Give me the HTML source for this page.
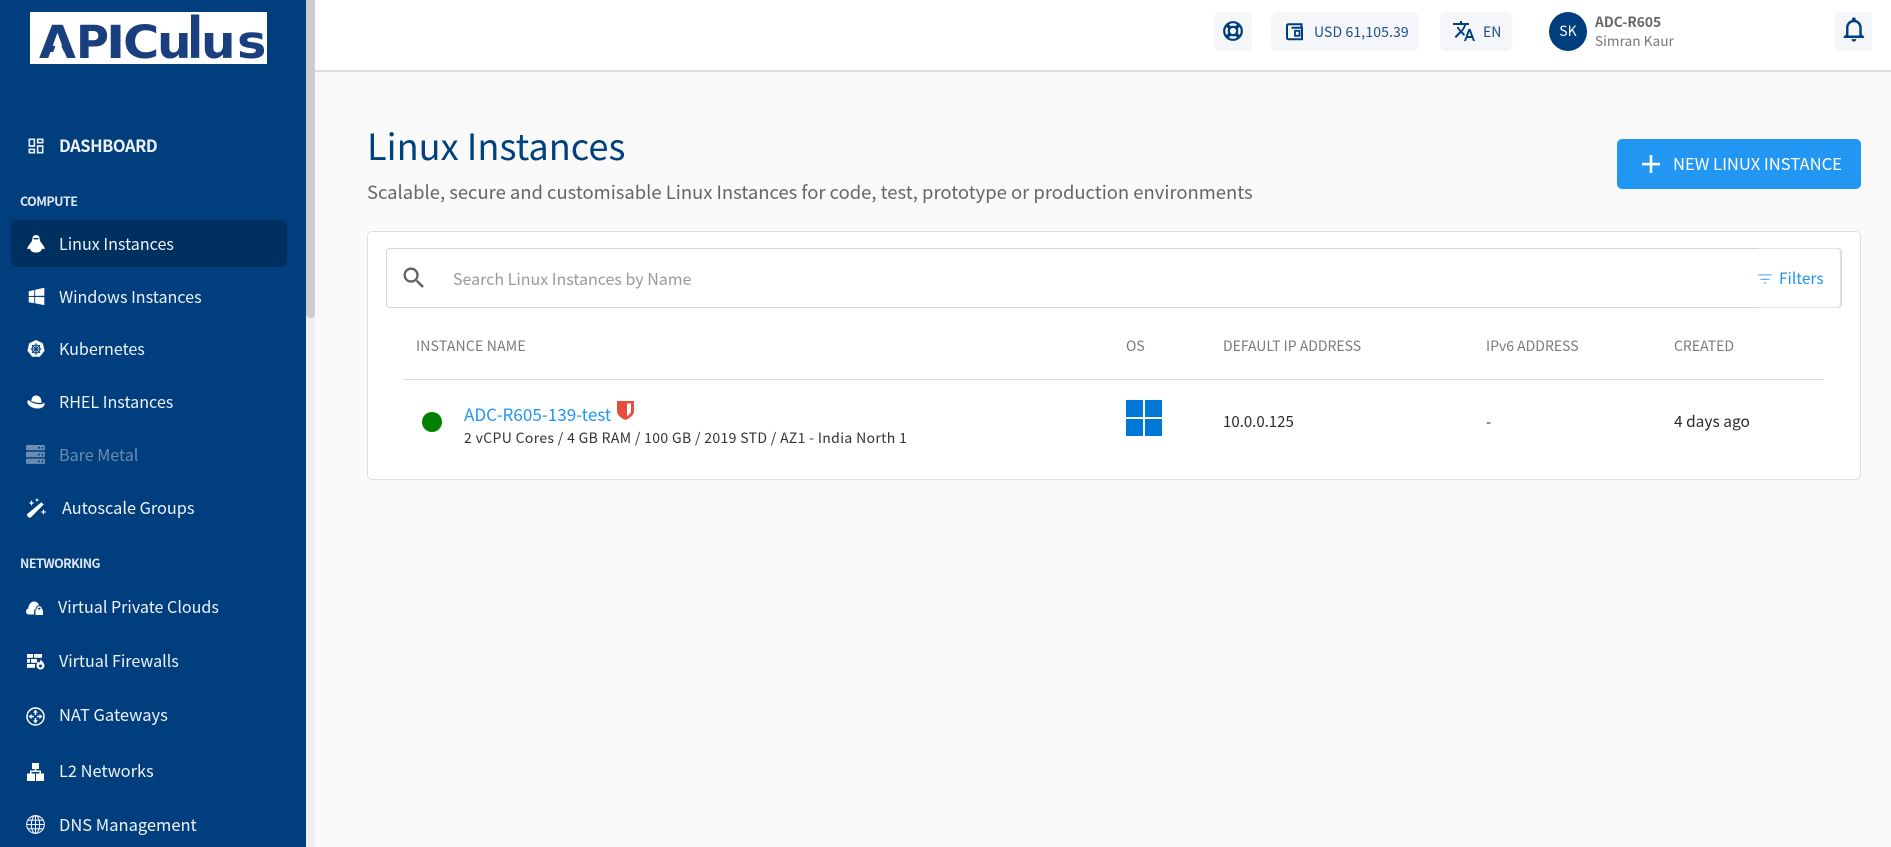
<!DOCTYPE html>
<html lang="en"><head><meta charset="utf-8"><title>Linux Instances</title>
<style>
html,body{margin:0;padding:0;width:1891px;height:847px;overflow:hidden;background:#fafafa;font-family:"Noto Sans CJK JP","Liberation Sans",sans-serif;}
.a{position:absolute;white-space:nowrap;line-height:1;}
svg{position:absolute;display:block}
.nav{color:#eef3f9;font-size:16.100px;left:59px;}
.sec{color:#dfe7f1;font-size:12.500px;font-weight:700;left:20px;letter-spacing:-.55px;}
.th{color:#7a7a7a;font-size:14px;top:339px;}
.box{position:absolute;background:#f4f6f9;border-radius:6px;top:12px;height:39px;}
.td{color:#2b2b2b;font-size:15px;top:414px;}
.lg{position:absolute;top:8px;font-family:'DejaVu Sans',sans-serif;font-weight:700;font-size:45px;line-height:45px;color:#1a3f7e;transform-origin:0 38px;white-space:nowrap}
</style></head><body>

<div class="a" style="left:0;top:0;width:306px;height:847px;background:#003e7e"></div>
<div class="a" style="left:306px;top:0;width:9px;height:847px;background:#f0f0f0"></div>
<div class="a" style="left:306px;top:0;width:9px;height:318px;background:#cdcdcd;border-radius:0 0 4px 4px"></div>

<div class="a" style="left:30px;top:12px;width:237px;height:52px;background:#fff;overflow:hidden">
<span class="lg" style="left:9px;transform:scaleX(1.060)">A</span>
<svg style="left:0;top:0" width="60" height="52"><polygon points="28,27 21,46 37,46" fill="#fff"/></svg>
<span class="lg" style="left:46px;">P</span>
<span class="lg" style="left:76px;transform:scaleX(1.150)">I</span>
<span class="lg" style="left:92.500px;transform:scaleX(1.100)">C</span>
<span class="lg" style="left:127px;transform:scaleX(1.080)">u</span>
<span class="lg" style="left:157px;transform:scaleX(1.050) scaleY(1.260)">l</span>
<span class="lg" style="left:171px;transform:scaleX(1.080)">u</span>
<span class="lg" style="left:207px;transform:scaleX(1.100)">s</span>
</div>

<svg style="left:25.500px;top:135.500px" width="20" height="20" viewBox="0 0 24 24" fill="#e8eef6"><path d="M19,5V7H15V5H19M9,5V11H5V5H9M19,13V19H15V13H19M9,17V19H5V17H9M21,3H13V9H21V3M11,3H3V13H11V3M21,11H13V21H21V11M11,15H3V21H11V15Z"/></svg>
<div class="a nav" style="top:137px;font-size:16.500px;font-weight:700;letter-spacing:-.45px;">DASHBOARD</div>
<div class="a sec" style="top:195px;">COMPUTE</div>

<div class="a" style="left:11px;top:220px;width:276px;height:47px;background:#00305f;border-radius:6px"></div>
<svg style="left:27px;top:235px" width="18" height="18" viewBox="0 0 18 18"><path d="M9 0C6.600 0 5.400 1.800 5.300 4 5.200 6.400 3.700 7.700 2.200 9.800 1 11.500.2 12.800.4 13.800.7 14.600 1.800 14.200 3 13.500 3.500 16.200 5.500 17.500 9 17.500S14.500 16.200 15 13.500C16.200 14.200 17.300 14.600 17.600 13.800 17.800 12.800 17 11.500 15.800 9.800 14.300 7.700 12.800 6.400 12.700 4 12.600 1.800 11.400 0 9 0Z" fill="#fff"/><rect x="6.500" y="3" width="5" height="1.400" rx=".6" fill="#00305f"/></svg>
<div class="a nav" style="top:235px;">Linux Instances</div>

<svg style="left:26px;top:285px" width="22" height="22" viewBox="0 0 24 24" fill="#fff"><path d="M3,12V6.750L9,5.430V11.910L3,12M20,3V11.750L10,11.900V5.210L20,3M3,13L9,13.090V19.900L3,18.750V13M20,13.250V22L10,20.090V13.100L20,13.250Z"/></svg>
<div class="a nav" style="top:288px;">Windows Instances</div>

<svg style="left:27px;top:340px" width="18" height="18" viewBox="0 0 18 18"><path d="M9 0 15.800 3.300 17.600 10.700 12.800 16.800H5.200L.4 10.700 2.200 3.300Z" fill="#fff"/><g stroke="#003e7e" stroke-width="1.100" fill="none"><circle cx="9" cy="9" r="4"/><path d="M9 3.300V14.700M3.600 9H14.400M5 5 13 13M13 5 5 13"/></g></svg>
<div class="a nav" style="top:340px;">Kubernetes</div>

<svg style="left:27px;top:395px" width="18" height="14" viewBox="0 0 18 14" fill="#fff"><path d="M4.500 5.500C4.600 2.500 6.300.5 9 .5 12 .5 14 2.300 14.300 5.300 14.400 6.400 14.500 7 15 7.500 12 8.500 7 7.500 3.200 5.400 3.700 5.300 4.200 5.400 4.500 5.500Z"/><path d="M1.300 5C.4 6 0 7 .4 8 1.800 11.200 6 13.500 10.500 13.500 14.500 13.500 17.500 11.800 17.600 9 17.600 8.500 17.300 8 17 7.600 15 10.200 7.500 10 1.300 5Z"/></svg>
<div class="a nav" style="top:393px;">RHEL Instances</div>

<svg style="left:26px;top:445px" width="19" height="19" viewBox="0 0 19 19" fill="#6c8cb2"><rect y="0" width="19" height="5.300" rx="1"/><rect y="6.800" width="19" height="5.300" rx="1"/><rect y="13.600" width="19" height="5.300" rx="1"/><g fill="#003e7e"><rect x="12" y="2" width="2" height="1.500"/><rect x="15.500" y="2" width="2" height="1.500"/><rect x="12" y="8.800" width="2" height="1.500"/><rect x="15.500" y="8.800" width="2" height="1.500"/><rect x="12" y="15.600" width="2" height="1.500"/><rect x="15.500" y="15.600" width="2" height="1.500"/></g></svg>
<div class="a nav" style="top:446px;color:#6c8cb2;">Bare Metal</div>

<svg style="left:26px;top:498px" width="21" height="20" viewBox="0 0 21 20" fill="#fff"><path d="M15.500 4.300 17.700 6.500 5 19.200C4.300 19.900 3.200 19.900 2.500 19.200L1.500 18.200C.8 17.500.8 16.400 1.500 15.700Z"/><path d="M5.500 2 6.300 4.200 8.500 5 6.300 5.800 5.500 8 4.700 5.800 2.500 5 4.700 4.200Z"/><path d="M11 0 11.600 1.400 13 2 11.600 2.600 11 4 10.400 2.600 9 2 10.400 1.400Z"/><path d="M17.500 11 18.300 13.200 20.500 14 18.300 14.800 17.500 17 16.700 14.800 14.500 14 16.700 13.200Z"/></svg>
<div class="a nav" style="top:499px;left:62px;font-size:16.300px">Autoscale Groups</div>

<div class="a sec" style="top:557px;">NETWORKING</div>

<svg style="left:26px;top:600px" width="18" height="15" viewBox="0 0 18 15" fill="#fff"><path d="M2.800 14.500C1 14.500 0 13.200 0 11.500 0 10 1 8.800 2.300 8.500 2.500 4.500 5 1.500 8.200 1.500 10.500 1.500 12.300 3 13 5.200 11.300 5.300 9.800 6.700 9.600 8.700 8.500 9.300 8.100 10.200 8.100 11.300V14.500Z"/><path d="M9.500 9.500H10.600V8.800C10.600 7.300 11.800 6.300 13.200 6.300S15.800 7.300 15.800 8.800V9.500H17V15H9.500ZM12 9.500H14.400V8.800C14.400 8.100 13.900 7.600 13.200 7.600S12 8.100 12 8.800Z" fill-rule="evenodd"/></svg>
<div class="a nav" style="top:598px;left:58px;">Virtual Private Clouds</div>

<svg style="left:27px;top:653px" width="18" height="17" viewBox="0 0 18 17" fill="#fff"><rect x="0" y="1" width="6" height="3.800"/><rect x="7" y="1" width="8" height="3.800"/><rect x="0" y="6" width="3" height="3.800"/><rect x="4" y="6" width="6" height="3.800"/><rect x="0" y="11" width="8" height="3.800"/><path d="M13.500 6C14 8 17.500 9.500 17.500 12.500 17.500 15 15.500 16.500 13.500 16.500S9.500 15 9.500 12.500C9.500 10.500 10.500 9.500 11 8.500 11.500 9.300 12 9.600 12.500 9.600 13.200 8.500 13.500 7.500 13.500 6Z"/><circle cx="13.500" cy="13" r="1.500" fill="#003e7e"/></svg>
<div class="a nav" style="top:652px;">Virtual Firewalls</div>

<svg style="left:26px;top:707px" width="19" height="19" viewBox="0 0 19 19"><circle cx="9.500" cy="9.500" r="8.500" fill="none" stroke="#fff" stroke-width="1.500"/><g fill="#fff"><path d="M9.500 2.500 12 5.600H10.300V8H8.700V5.600H7Z"/><path d="M9.500 16.500 7 13.400H8.700V11H10.300V13.400H12Z"/><path d="M2.500 9.500 5.600 7V8.700H8V10.300H5.600V12Z"/><path d="M16.500 9.500 13.400 12V10.300H11V8.700H13.400V7Z"/></g></svg>
<div class="a nav" style="top:706px;font-size:16.500px">NAT Gateways</div>

<svg style="left:27px;top:763px" width="17" height="18" viewBox="0 0 17 18" fill="#fff"><rect x="5" y="0" width="7" height="6"/><rect x="0" y="10.500" width="8" height="7.500"/><rect x="9" y="10.500" width="8" height="7.500"/><path d="M7.700 5H9.300V7.500H14V11H12.500V9H4.500V11H3V7.500H7.700Z"/></svg>
<div class="a nav" style="top:762px;font-size:16.400px">L2 Networks</div>

<svg style="left:26px;top:815px" width="19" height="19" viewBox="0 0 19 19" fill="none" stroke="#eef3f9" stroke-width="1.100"><circle cx="9.500" cy="9.500" r="8.800"/><ellipse cx="9.500" cy="9.500" rx="4.200" ry="8.800"/><path d="M9.500 .7V18.300M.7 9.500H18.300M1.800 5.200H17.200M1.800 13.800H17.200"/></svg>
<div class="a nav" style="top:816px;font-size:16.500px">DNS Management</div>

<div class="a" style="left:315px;top:0;width:1576px;height:70px;background:#fff"></div>
<div class="a" style="left:315px;top:70px;width:1576px;height:2px;background:#dedede"></div>

<div class="box" style="left:1214px;width:38px"></div>
<svg style="left:1223px;top:21px" width="20" height="20" viewBox="0 0 20 20" fill="none" stroke="#003e7e"><circle cx="10" cy="10" r="8.800" stroke-width="2.200"/><circle cx="10" cy="10" r="4.200" stroke-width="2.200"/><path d="M4 4 7 7M16 4 13 7M4 16 7 13M16 16 13 13" stroke-width="3.600"/></svg>

<div class="box" style="left:1271px;width:148px"></div>
<svg style="left:1285px;top:22px" width="19" height="19" viewBox="0 0 19 19" fill="none" stroke="#003e7e" stroke-width="2"><path d="M16.500 5.500V2.200H3.500A1.500 1.500 0 0 0 2 3.700V15.800A1.500 1.500 0 0 0 3.500 17.300H17V5.800H6.500"/><rect x="10" y="8.800" width="4.500" height="5" fill="none" stroke-width="1.800"/></svg>
<div class="a" style="left:1314px;top:25px;font-size:14px;color:#1f4f86;letter-spacing:.12px">USD 61,105.39</div>

<div class="box" style="left:1440px;width:72px"></div>
<svg style="left:1452px;top:19px" width="24" height="24" viewBox="0 0 24 24" fill="#003e7e"><path d="M12.870,15.070L10.330,12.560L10.360,12.530C12.100,10.590 13.340,8.360 14.070,6H17V4H10V2H8V4H1V6H12.170C11.500,7.920 10.440,9.750 9,11.350C8.070,10.320 7.300,9.190 6.690,8H4.690C5.420,9.630 6.420,11.170 7.670,12.560L2.580,17.580L4,19L9,14L12.110,17.110L12.870,15.070M18.500,10H16.500L12,22H14L15.120,19H19.870L21,22H23L18.500,10M15.880,17L17.500,12.670L19.120,17H15.880Z"/></svg>
<div class="a" style="left:1483px;top:25px;font-size:14px;color:#1f4f86;">EN</div>

<div class="a" style="left:1549px;top:12px;width:38px;height:39px;border-radius:50%;background:#003e7e;color:#fff;font-size:14px;line-height:39px;text-align:center">SK</div>
<div class="a" style="left:1595px;top:15px;font-size:13.800px;font-weight:700;color:#666;">ADC-R605</div>
<div class="a" style="left:1595px;top:34px;font-size:13.700px;color:#777;">Simran Kaur</div>

<div class="box" style="left:1835px;width:37px;border-radius:0"></div>
<svg style="left:1840px;top:15px" width="29" height="29" viewBox="0 0 24 24" fill="#003e7e"><path d="M16,17H7V10.500C7,8 9,6 11.500,6C14,6 16,8 16,10.500M18,16V10.500C18,7.430 15.860,4.860 13,4.180V3.500A1.500,1.500 0 0,0 11.500,2A1.500,1.500 0 0,0 10,3.500V4.180C7.130,4.860 5,7.430 5,10.500V16L3,18V19H20V18M11.500,22A2,2 0 0,0 13.500,20H9.500A2,2 0 0,0 11.500,22Z"/></svg>

<div class="a" style="left:367px;top:127px;font-size:36.200px;color:#00417f;">Linux Instances</div>
<div class="a" style="left:367px;top:183px;font-size:18.430px;color:#666;">Scalable, secure and customisable Linux Instances for code, test, prototype or production environments</div>

<div class="a" style="left:1617px;top:139px;width:244px;height:50px;background:#2196f3;border-radius:5px"></div>
<svg style="left:1640px;top:153px" width="22" height="22" viewBox="0 0 22 22" fill="#fff"><rect x="2" y="9.800" width="18" height="2.600"/><rect x="9.700" y="2" width="2.600" height="18"/></svg>
<div class="a" style="left:1673px;top:155px;font-size:16.600px;color:#fff;">NEW LINUX INSTANCE</div>

<div class="a" style="left:367px;top:231px;width:1492px;height:247px;background:#fff;border:1px solid #dedede;border-radius:5px"></div>
<div class="a" style="left:386px;top:248px;width:1454px;height:58px;border:1px solid #d3d7df;border-radius:4px;background:#fff"></div>
<div class="a" style="left:1757px;top:248px;width:83px;height:58px;border:1px solid #e4e4e4;border-left:0;border-radius:0 4px 4px 0;background:#fff"></div>
<svg style="left:400px;top:264px" width="28" height="28" viewBox="0 0 24 24" fill="#606060"><path d="M9.500,3A6.500,6.500 0 0,1 16,9.500C16,11.110 15.410,12.590 14.440,13.730L14.710,14H15.500L20.500,19L19,20.500L14,15.500V14.710L13.730,14.440C12.590,15.410 11.110,16 9.500,16A6.500,6.500 0 0,1 3,9.500A6.500,6.500 0 0,1 9.500,3M9.500,5C7,5 5,7 5,9.500C5,12 7,14 9.500,14C12,14 14,12 14,9.500C14,7 12,5 9.500,5Z"/></svg>
<div class="a" style="left:453px;top:270px;font-size:16px;color:#9a9a9a;">Search Linux Instances by Name</div>
<svg style="left:1756px;top:270px" width="18" height="18" viewBox="0 0 24 24" fill="#2196f3"><path d="M6,13H18V11.800H6M3,6V7.200H21V6M10,18H14V16.800H10V18Z"/></svg>
<div class="a" style="left:1779px;top:271px;font-size:15.500px;color:#2196f3;">Filters</div>

<div class="a th" style="left:416px;letter-spacing:.2px">INSTANCE NAME</div>
<div class="a th" style="left:1126px;">OS</div>
<div class="a th" style="left:1223px;">DEFAULT IP ADDRESS</div>
<div class="a th" style="left:1486px;">IPv6 ADDRESS</div>
<div class="a th" style="left:1674px;">CREATED</div>
<div class="a" style="left:404px;top:379px;width:1420px;height:1px;background:#dedede"></div>

<div class="a" style="left:422px;top:412px;width:20px;height:20px;border-radius:50%;background:#008000"></div>
<div class="a" style="left:464px;top:405px;font-size:17.100px;color:#2196f3;">ADC-R605-139-test</div>
<svg style="left:617px;top:400px" width="17" height="20" viewBox="0 0 17 20"><path d="M0 1H17V11C17 15 13 18 8.500 20 4 18 0 15 0 11Z" fill="#e74c3c"/><path d="M10 3.500H14V10.500C14 13 12 15 10 16.200Z" fill="#fff"/></svg>
<div class="a" style="left:464px;top:431px;font-size:14px;color:#333;letter-spacing:.34px">2 vCPU Cores / 4 GB RAM / 100 GB / 2019 STD / AZ1 - India North 1</div>

<svg style="left:1126px;top:400px" width="36" height="36" viewBox="0 0 36 36" fill="#0078d7"><rect width="17" height="17"/><rect x="19" width="17" height="17"/><rect y="19" width="17" height="17"/><rect x="19" y="19" width="17" height="17"/></svg>
<div class="a td" style="left:1223px;">10.0.0.125</div>
<div class="a td" style="left:1486px;">-</div>
<div class="a td" style="left:1674px;font-size:15.500px;">4 days ago</div>

</body></html>
